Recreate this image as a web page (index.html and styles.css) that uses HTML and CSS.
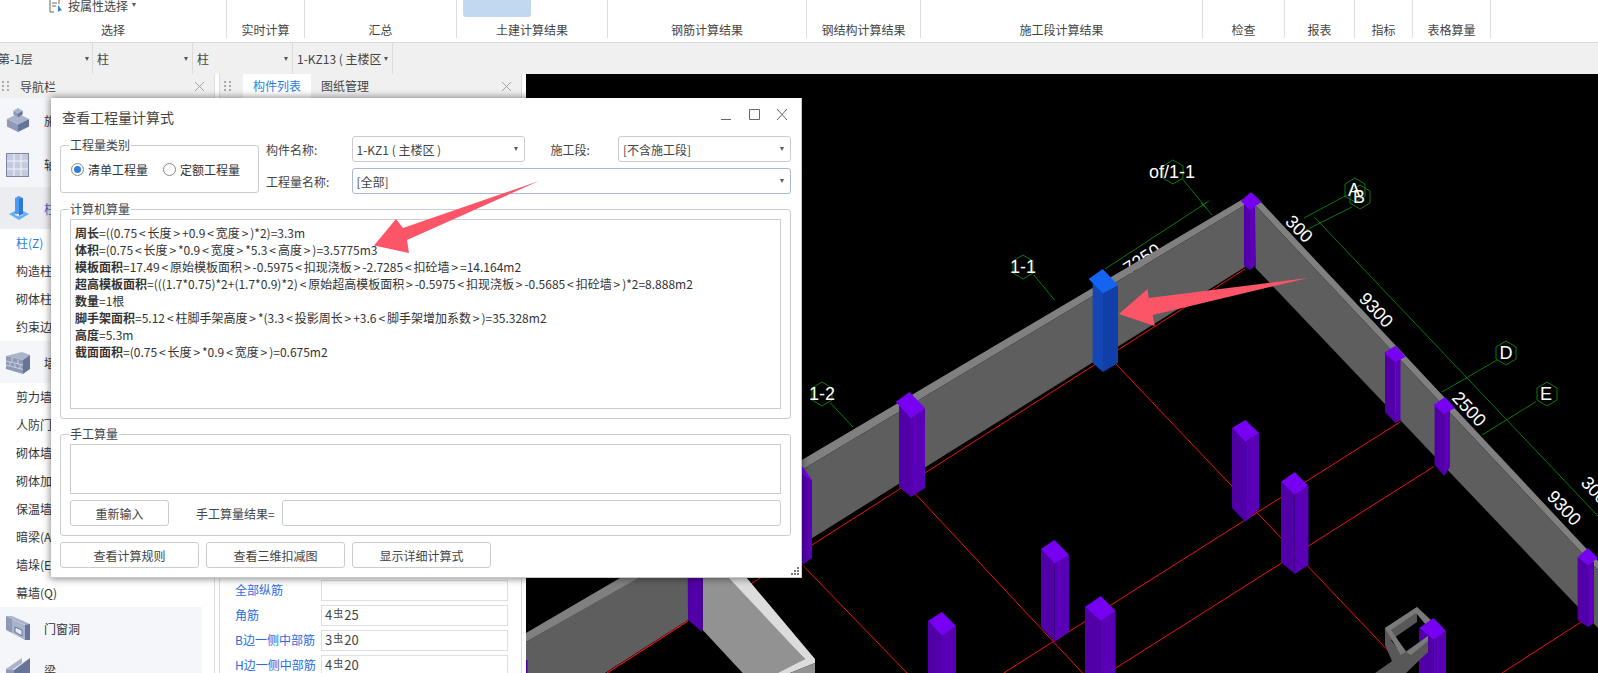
FILE: index.html
```html
<!DOCTYPE html>
<html lang="zh-CN">
<head>
<meta charset="utf-8">
<title>查看工程量计算式</title>
<link rel="stylesheet" href="styles.css">
</head>
<body>
<div class="app">
  <header class="ribbon">
    <section class="rb-group">
      <div class="rb-body rb-select">
        <svg class="rb-icon" viewBox="0 0 14 13"><path class="ln-dark" d="M1 0V12H5M10 0V4M3 3H8M3 6H7"/><path class="fill-blue" d="M9 5V12L11 10.500L13 10.500Z"/></svg>
        <span>按属性选择</span><i class="caret rb-caret"></i>
      </div>
      <div class="rb-label">选择</div>
    </section>
    <section class="rb-group"><div class="rb-body"></div><div class="rb-label">实时计算</div></section>
    <section class="rb-group"><div class="rb-body"></div><div class="rb-label">汇总</div></section>
    <section class="rb-group"><div class="rb-body"><div class="rb-active"></div></div><div class="rb-label">土建计算结果</div></section>
    <section class="rb-group"><div class="rb-body"></div><div class="rb-label">钢筋计算结果</div></section>
    <section class="rb-group"><div class="rb-body"></div><div class="rb-label">钢结构计算结果</div></section>
    <section class="rb-group"><div class="rb-body"></div><div class="rb-label">施工段计算结果</div></section>
    <section class="rb-group"><div class="rb-body"></div><div class="rb-label">检查</div></section>
    <section class="rb-group"><div class="rb-body"></div><div class="rb-label">报表</div></section>
    <section class="rb-group"><div class="rb-body"></div><div class="rb-label">指标</div></section>
    <section class="rb-group"><div class="rb-body"></div><div class="rb-label">表格算量</div></section>
  </header>

  <div class="toolbar">
    <div class="tb-cell tb-first"><span class="tb-text">第-1层</span><i class="caret"></i></div>
    <div class="tb-cell"><span class="tb-text">柱</span><i class="caret"></i></div>
    <div class="tb-cell"><span class="tb-text">柱</span><i class="caret"></i></div>
    <div class="tb-cell"><span class="tb-text">1-KZ13 ( 主楼区 )</span><i class="caret"></i></div>
  </div>

  <main class="workspace">
    <aside class="panel nav-panel">
      <div class="panel-head">
        <span class="grip"><i></i><i></i><i></i><i></i><i></i><i></i></span>
        <span class="panel-title">导航栏</span>
        <svg class="panel-x" viewBox="0 0 10 10"><path d="M0 0L10 10M10 0L0 10"/></svg>
      </div>
      <div class="nav-list">
        <div class="nav-head nav-h44">
          <svg class="nav-icon" viewBox="0 0 24 26"><path class="i-top" d="M12 6L24 12L12 18L0 12Z"/><path class="i-left" d="M0 12L12 18V26L0 20Z"/><path class="i-right" d="M24 12L12 18V26L24 20Z"/><path class="i-top" d="M12 0L17 3L12 6L7 3Z"/><path class="i-left" d="M7 3L12 6V10L7 7Z"/><path class="i-right" d="M17 3L12 6V10L17 7Z"/></svg>
          <span>施工段</span>
        </div>
        <div class="nav-head nav-h44">
          <svg class="nav-icon" viewBox="0 0 24 24"><rect class="i-gridbox" x="0.500" y="0.500" width="22" height="23"/><path class="i-gridln" d="M8 1V23M15 1V23M1 8H22M1 16H22"/></svg>
          <span>轴线</span>
        </div>
        <div class="nav-head nav-active">
          <svg class="nav-icon" viewBox="0 0 24 24"><path class="i-blue" d="M9 2L13 0L17 2V18H9Z"/><path class="i-bluedk" d="M13 3L17 2V18L13 20Z"/><path class="i-bluelt" d="M3 18L9 15V19L13 20.500L17 19V15L23 18L13 24Z"/></svg>
          <span class="nav-active-text">柱</span>
        </div>
        <div class="nav-item nav-current">柱(Z)</div>
        <div class="nav-item">构造柱(Z)</div>
        <div class="nav-item">砌体柱(Z)</div>
        <div class="nav-item">约束边缘非阴影区(Z)</div>
        <div class="nav-head">
          <svg class="nav-icon" viewBox="0 0 24 24"><path class="i-grid" d="M0 6L16 2L24 5L17 10Z"/><path class="i-left" d="M0 6L17 10V24L0 19Z"/><path class="i-right" d="M17 10L24 5V19L17 24Z"/><path class="i-brick" d="M0 11L17 15M0 15L17 19.500M6 8V12M12 9.500V14M4 12V16M9 13.500V18M14 15V19"/></svg>
          <span>墙</span>
        </div>
        <div class="nav-item">剪力墙(Q)</div>
        <div class="nav-item">人防门框墙(RF)</div>
        <div class="nav-item">砌体墙(Q)</div>
        <div class="nav-item">砌体加筋(Y)</div>
        <div class="nav-item">保温墙(Q)</div>
        <div class="nav-item">暗梁(A)</div>
        <div class="nav-item">墙垛(E)</div>
        <div class="nav-item">幕墙(Q)</div>
        <div class="nav-head">
          <svg class="nav-icon" viewBox="0 0 24 24"><path class="i-grid" d="M0 0L6 0L24 8V11L6 3Z"/><path class="i-left" d="M0 0L6 3V17L0 14Z"/><path class="i-right" d="M19 9L24 8V24L19 24Z"/><path class="i-grid" d="M6 3L19 9V24L6 17Z"/><path class="i-hole" d="M9 11L16 14V20L9 16Z"/></svg>
          <span>门窗洞</span>
        </div>
        <div class="nav-head">
          <svg class="nav-icon" viewBox="0 0 24 24"><path class="i-grid" d="M0 11L16 0L16 5L6 12Z"/><path class="i-left" d="M0 11L8 12V24H0Z"/><path class="i-right" d="M8 12L24 0V16L8 24Z"/></svg>
          <span>梁</span>
        </div>
      </div>
    </aside>

    <aside class="panel comp-panel">
      <div class="panel-head comp-head">
        <span class="grip"><i></i><i></i><i></i><i></i><i></i><i></i></span>
        <span class="tab tab-on">构件列表</span>
        <span class="tab">图纸管理</span>
        <svg class="panel-x" viewBox="0 0 10 10"><path d="M0 0L10 10M10 0L0 10"/></svg>
      </div>
      <div class="prop-list">
        <div class="prop-row"><span class="prop-key">全部纵筋</span><span class="prop-val"></span></div>
        <div class="prop-row"><span class="prop-key">角筋</span><span class="prop-val">4<span class="rebar">虫</span>25</span></div>
        <div class="prop-row"><span class="prop-key">B边一侧中部筋</span><span class="prop-val">3<span class="rebar">虫</span>20</span></div>
        <div class="prop-row"><span class="prop-key">H边一侧中部筋</span><span class="prop-val">4<span class="rebar">虫</span>20</span></div>
      </div>
    </aside>

    <div class="viewport">
      <svg class="scene" viewBox="526 74 1072 599">
        <defs>
          <polygon id="hex" class="hex" points="0,-12 10,-6 10,6 0,12 -10,6 -10,-6"/>
        </defs>
        <!-- grid lines -->
        <path class="red" d="M1245 269L746 587M1581 622L1502 673M1400.500 421.700L1003.600 673M1433.600 466.700L1108 673M1115 363L1395 658M802.500 565L907 673M914.500 493L1082.500 673M688 621L607 673"/>
        <!-- dimension lines -->
        <path class="grn" d="M1181.700 178L1212 215M1209 201L1105 269M1201 203L1208 210M1034 275L1054.500 300M830.500 403L853 427M1347 195L1304 218M1352 207L1306 230M1314 216.700L1598 516M1497 360L1442 392M1536 401.700L1482 435"/>
        <use href="#hex" x="1173" y="172"/>
        <use href="#hex" x="1023" y="267"/>
        <use href="#hex" x="822" y="394"/>
        <use href="#hex" x="1355" y="190"/>
        <use href="#hex" x="1360" y="197"/>
        <use href="#hex" x="1506" y="353"/>
        <use href="#hex" x="1547" y="394"/>
        <text class="cad" transform="translate(1142 259) rotate(-33)">7250</text>
        <!-- back-left wall -->
        <path class="wall-strip" d="M1243 199L790 467V477L1245 205Z"/>
        <path class="wall-face" d="M1245 205V267L790 552V477Z"/>
        <!-- back-right wall -->
        <path class="wall-strip" d="M1261 202L1598 561V570L1255 205Z"/>
        <path class="wall-face" d="M1255 205L1598 570V628L1255.500 268Z"/>
        <!-- lower-left walls under the dialog -->
        <path class="wall-strip" d="M526 633L620 578H640L526 642Z"/>
        <path class="wall-face" d="M526 642L640 577H688V620L605 673H526Z"/>
        <path class="red" d="M688 621L607 673"/>
        <path class="wall-lt" d="M702.700 577H735L805 659L780 673H742.700L702.700 630Z"/>
        <path class="wall-hi" d="M728 577H746L815 659V663L790 673H778L805 659Z"/>
        <path class="wall-lt" d="M815 663V673H790Z"/>
        <path class="col-left" d="M526 660H527.500V673H526Z"/>
        <path class="col-left" d="M687.700 577H702.700V630L701 631L688 620Z"/>
        <!-- columns on walls -->
        <path class="col-left" d="M1244 200L1250 208V270L1244 266Z"/><path class="col-right" d="M1250 208L1255 203V266L1250 270Z"/><path class="col-top" d="M1251 192L1261.500 202L1250 210L1240.700 201Z"/>
        <path class="blue-left" d="M1092.600 279L1103 293V372L1092.600 363Z"/><path class="blue-right" d="M1103 293L1118 285V363L1103 372Z"/><path class="blue-top" d="M1102.800 269L1118 285L1102.800 293L1088.600 279Z"/>
        <path class="col-left" d="M899 404L911 418V497L899 487Z"/><path class="col-right" d="M911 418L925 408V488L911 497Z"/><path class="col-top" d="M909.400 392L925 408L911 418L895.700 402Z"/>
        <path class="col-left" d="M800 470L802 474V565L800 563Z"/><path class="col-right" d="M802 474L812 480V558L802 565Z"/><path class="col-top" d="M802 466L812 480L802 474Z"/>
        <path class="col-left" d="M1385 353L1395.400 362V423L1385 412Z"/><path class="col-right" d="M1395.400 362L1400.500 358V420L1395.400 423Z"/><path class="col-top" d="M1395.400 345.700L1405.600 356.700L1395.400 362L1384 352.700Z"/>
        <path class="col-left" d="M1434.600 405L1444 414V475.700L1434.600 465Z"/><path class="col-right" d="M1444 414L1450 410V467L1444 475.700Z"/><path class="col-top" d="M1445 397L1455 408L1444 414L1433.600 405Z"/>
        <path class="col-left" d="M1577.600 557L1588 565V627L1577.600 620Z"/><path class="col-right" d="M1588 565L1594 561V623L1588 627Z"/><path class="col-top" d="M1588 548L1598 558L1588 565L1577.600 557Z"/>
        <!-- free columns -->
        <path class="col-left" d="M1232 428L1245.300 442V521.700L1232 508Z"/><path class="col-right" d="M1245.300 442L1259 433V509L1245.300 521.700Z"/><path class="col-top" d="M1245.300 420L1259 433L1245.300 442L1232 428Z"/>
        <path class="col-left" d="M1281 481.700L1294.700 495V574L1281 562Z"/><path class="col-right" d="M1294.700 495L1308.400 486V565L1294.700 574Z"/><path class="col-top" d="M1294.700 472L1308.400 486L1294.700 495L1281 481.700Z"/>
        <path class="col-left" d="M1041 549L1054.500 564V642L1041 627Z"/><path class="col-right" d="M1054.500 564L1069 555V632L1054.500 642Z"/><path class="col-top" d="M1054.500 540L1069 555L1054.500 564L1041 549Z"/>
        <path class="col-left" d="M1085 607L1100.800 621V673H1085Z"/><path class="col-right" d="M1100.800 621L1115.500 611V673H1100.800Z"/><path class="col-top" d="M1100.800 596L1115.500 611L1100.800 621L1085 607Z"/>
        <path class="col-left" d="M928 621L942 636V673H928Z"/><path class="col-right" d="M942 636L956 626V673H942Z"/><path class="col-top" d="M942 612L956 626L942 636L928 621Z"/>
        <!-- small wall frame -->
        <path class="frame-face" d="M1385 628L1417 607V622L1391 640L1406 660L1395 668L1385 645Z"/>
        <path class="frame-strip" d="M1385 628L1417 607L1431 620L1426 625L1416 613L1391 630L1412 660L1406 664Z"/>
        <path class="col-left" d="M1419 628L1433.600 640V673H1419Z"/><path class="col-right" d="M1433.600 640L1446 631V673H1433.600Z"/><path class="col-top" d="M1433.600 618L1446 631L1433.600 640L1419.300 628Z"/>
        <path class="frame-face" d="M1375 673L1408 650L1428 636V652L1406 673Z"/>
        <path class="frame-strip" d="M1406 652L1428 636V641L1411 655Z"/>
        <!-- labels -->
        <text class="cad" x="1172" y="172">of/1-1</text>
        <text class="cad" x="1023" y="267">1-1</text>
        <text class="cad" x="822" y="394">1-2</text>
        <text class="cad" x="1354" y="190">A</text>
        <text class="cad" x="1359" y="197">B</text>
        <text class="cad" x="1506" y="353">D</text>
        <text class="cad" x="1546" y="394">E</text>
        <text class="cad" transform="translate(1299 229) rotate(45)">300</text>
        <text class="cad" transform="translate(1376 310) rotate(47)">9300</text>
        <text class="cad" transform="translate(1469 409) rotate(47)">2500</text>
        <text class="cad" transform="translate(1564 508) rotate(47)">9300</text>
        <text class="cad" transform="translate(1598 494) rotate(47)">3000</text>
        <path class="pink" d="M1308 278L1148.600 298L1147.600 289L1119 314L1154.700 326L1152.700 315Z"/>
      </svg>
    </div>
  </main>

  <section class="dialog">
    <div class="dlg-title">
      <span class="dlg-name">查看工程量计算式</span>
      <svg class="dlg-ctl" viewBox="0 0 66 12"><path d="M0 10.500H10M28.500 0.500H38.500V10.500H28.500ZM56 0L66 11M66 0L56 11"/></svg>
    </div>
    <div class="dlg-top">
      <div class="group group-kind">
        <span class="legend">工程量类别</span>
        <span class="radio radio-on"></span><span class="radio-text">清单工程量</span>
        <span class="radio radio-second"></span><span class="radio-text">定额工程量</span>
      </div>
      <div class="dlg-form">
        <span class="form-label">构件名称:</span>
        <div class="combo"><span>1-KZ1 ( 主楼区 )</span><i class="caret"></i></div>
        <span class="form-label form-label-2">施工段:</span>
        <div class="combo"><span>[不含施工段]</span><i class="caret"></i></div>
        <span class="form-label">工程量名称:</span>
        <div class="combo combo-wide"><span>[全部]</span><i class="caret"></i></div>
      </div>
    </div>
    <div class="group group-auto">
      <span class="legend">计算机算量</span>
      <div class="calc-box">
        <p><b>周长</b>=((0.75<i class="ch">&lt;</i>长度<i class="ch">&gt;</i>+0.9<i class="ch">&lt;</i>宽度<i class="ch">&gt;</i>)*2)=3.3m</p>
        <p><b>体积</b>=(0.75<i class="ch">&lt;</i>长度<i class="ch">&gt;</i>*0.9<i class="ch">&lt;</i>宽度<i class="ch">&gt;</i>*5.3<i class="ch">&lt;</i>高度<i class="ch">&gt;</i>)=3.5775m3</p>
        <p><b>模板面积</b>=17.49<i class="ch">&lt;</i>原始模板面积<i class="ch">&gt;</i>-0.5975<i class="ch">&lt;</i>扣现浇板<i class="ch">&gt;</i>-2.7285<i class="ch">&lt;</i>扣砼墙<i class="ch">&gt;</i>=14.164m2</p>
        <p><b>超高模板面积</b>=(((1.7*0.75)*2+(1.7*0.9)*2)<i class="ch">&lt;</i>原始超高模板面积<i class="ch">&gt;</i>-0.5975<i class="ch">&lt;</i>扣现浇板<i class="ch">&gt;</i>-0.5685<i class="ch">&lt;</i>扣砼墙<i class="ch">&gt;</i>)*2=8.888m2</p>
        <p><b>数量</b>=1根</p>
        <p><b>脚手架面积</b>=5.12<i class="ch">&lt;</i>柱脚手架高度<i class="ch">&gt;</i>*(3.3<i class="ch">&lt;</i>投影周长<i class="ch">&gt;</i>+3.6<i class="ch">&lt;</i>脚手架增加系数<i class="ch">&gt;</i>)=35.328m2</p>
        <p><b>高度</b>=5.3m</p>
        <p><b>截面面积</b>=(0.75<i class="ch">&lt;</i>长度<i class="ch">&gt;</i>*0.9<i class="ch">&lt;</i>宽度<i class="ch">&gt;</i>)=0.675m2</p>
      </div>
    </div>
    <div class="group group-manual">
      <span class="legend">手工算量</span>
      <div class="manual-box"></div>
      <div class="manual-row">
        <span class="btn btn-reset">重新输入</span>
        <span class="manual-label">手工算量结果=</span>
        <span class="manual-input"></span>
      </div>
    </div>
    <div class="dlg-actions">
      <span class="btn btn-act">查看计算规则</span>
      <span class="btn btn-act">查看三维扣减图</span>
      <span class="btn btn-act">显示详细计算式</span>
    </div>
    <svg class="dlg-grip" viewBox="0 0 10 10"><path d="M7 1h2v2h-2zM4 4h2v2h-2zM7 4h2v2h-2zM1 7h2v2h-2zM4 7h2v2h-2zM7 7h2v2h-2z"/></svg>
  </section>

  <svg class="arrow-over" viewBox="370 175 175 85"><path class="pink" d="M539 181L403 228L396 219L374 245.500L409 253L407 240Z"/></svg>
</div>
</body>
</html>
```

FILE: styles.css
```css
* { box-sizing: border-box; }
html, body { margin: 0; padding: 0; }
body { background: #fff; color: #333; font: 12px/17px "Noto Sans CJK SC", "Liberation Sans", sans-serif; }
p { margin: 0; }
i { font-style: normal; }

.app { position: relative; width: 1598px; height: 673px; overflow: hidden; display: flex; flex-direction: column; }

/* ribbon */
.ribbon { flex: none; height: 43px; display: grid; grid-template-columns: 227px 78px 152px 151px 199px 114px 282px 82px 70px 58px 78px; background: #fff; border-bottom: 1px solid #d9d9d9; }
.rb-group { height: 38px; border-right: 1px solid #dedede; display: flex; flex-direction: column; }
.rb-body { height: 22px; }
.rb-label { height: 16px; line-height: 16px; text-align: center; color: #444; }
.rb-select { display: flex; align-items: flex-start; height: 22px; padding-left: 49px; color: #444; }
.rb-icon { width: 14px; height: 13px; margin-right: 5px; }
.rb-select span { margin-top: -3px; }
.rb-caret { margin: 3px 0 0 4px; }
.ln-dark { fill: none; stroke: #666; stroke-width: 1; }
.fill-blue { fill: #2a7de1; }
.rb-active { width: 68px; height: 17px; margin-left: 6px; background: #c1d8f0; border-radius: 0 0 3px 3px; }

/* toolbar */
.toolbar { flex: none; height: 31px; display: flex; background: #f0f0f0; }
.tb-cell { width: 100px; height: 31px; display: flex; align-items: center; justify-content: space-between; padding: 0 4px; border-right: 1px solid #dcdcdc; color: #444; }
.tb-first { width: 93px; padding-left: 0; padding-right: 3px; }
.tb-first .tb-text { margin-left: -2px; }
.tb-text { width: 84px; overflow: hidden; white-space: nowrap; }
.caret { flex: none; display: block; width: 0; height: 0; border-left: 2.500px solid transparent; border-right: 2.500px solid transparent; border-top: 4px solid #555; }

/* workspace */
.workspace { flex: 1; min-height: 0; display: flex; background: #fff; }
.panel { flex: none; display: flex; flex-direction: column; height: 599px; overflow: hidden; }
.nav-panel { width: 215px; border-right: 1px solid #dcdcdc; }
.comp-panel { width: 303px; margin-left: 4px; border-left: 1px solid #dcdcdc; border-right: 1px solid #dcdcdc; }
.panel-head { flex: none; height: 24px; display: flex; align-items: center; background: #f0f0f0; color: #444; }
.panel-title { margin-left: 11px; }
.grip { width: 7px; margin-left: 2px; display: grid; grid-template-columns: 2px 2px; gap: 2px 3px; }
.grip i { width: 2px; height: 2px; background: #aaa; }
.panel-x { width: 9px; height: 9px; margin-left: auto; margin-right: 10px; fill: none; stroke: #999; stroke-width: 1; }
.comp-head .grip { margin-left: 4px; margin-right: 12px; }
.tab { height: 24px; line-height: 24px; padding: 0 10px; }
.tab-on { background: #fff; color: #1f7fe0; }

.nav-list { width: 202px; }
.nav-head { height: 42px; padding-left: 6px; display: flex; align-items: center; background: #f4f6f9; color: #333; }
.nav-h44 { height: 44.500px; }
.nav-active { background: #ecedf0; height: 42px; }
.nav-active-text { color: #4a63c8; }
.nav-icon { flex: none; width: 24px; height: 24px; margin-right: 14px; }
.nav-item { height: 28px; line-height: 28px; padding-left: 16px; white-space: nowrap; color: #333; }
.nav-current { color: #1f7fe0; }
.i-top, .i-grid { fill: #a9b3cc; }
.i-left { fill: #8e99b6; }
.i-right { fill: #67749a; }
.i-gridbox { fill: #c3cbdf; stroke: #7c86a3; stroke-width: 1; }
.i-gridln { fill: none; stroke: #f2f4f9; stroke-width: 1; }
.i-brick { fill: none; stroke: #c9cfe0; stroke-width: 1; }
.i-hole { fill: #e6e9f0; stroke: #67749a; }
.i-blue { fill: #4a9bf0; }
.i-bluedk { fill: #2d78d8; }
.i-bluelt { fill: #69aef2; }

.prop-list { padding: 482px 0 0 15px; }
.prop-row { display: flex; align-items: center; height: 21px; margin-bottom: 4px; }
.prop-key { width: 86px; margin-top: -2px; white-space: nowrap; color: #2a6be0; }
.prop-val { width: 187px; height: 21px; border: 1px solid #dedede; line-height: 17px; padding-left: 3px; color: #444; font-size: 13px; }
.rebar { font-size: 10px; position: relative; top: -3px; margin: 0 1px; }

/* 3D viewport */
.viewport { flex: 1; margin-left: 4px; min-width: 0; height: 599px; background: #000; }
.scene { display: block; width: 1072px; height: 599px; }
.hex { fill: none; stroke: #0b7a0b; stroke-width: 1; }
.red { fill: none; stroke: #f01010; stroke-width: 1; }
.grn { fill: none; stroke: #0a780a; stroke-width: 1; }
.cad { fill: #fff; font: 18px "Liberation Sans", sans-serif; text-anchor: middle; dominant-baseline: central; }
.wall-strip { fill: #808080; }
.wall-face { fill: #5e5e5e; }
.wall-lt { fill: #929292; }
.wall-hi { fill: #dcdcdc; }
.frame-face { fill: #585858; }
.frame-strip { fill: #7a7a7a; }
.col-top { fill: #7700f2; }
.col-left { fill: #5000a6; }
.col-right { fill: #5900b6; }
.blue-top { fill: #1464f4; }
.blue-left { fill: #1446b4; }
.blue-right { fill: #103fa8; }
.pink { fill: #fd5568; }

/* dialog */
.dialog { position: absolute; left: 51px; top: 98px; width: 751px; height: 480px; padding: 0 10px 0 9px; background: #fff; border: 1px solid #c8c8c8; border-width: 0 1px 1px 0; box-shadow: 0 0 7px 1px rgba(0, 0, 0, .45); }
.dlg-title { height: 38px; display: flex; align-items: center; justify-content: space-between; padding-right: 4px; }
.dlg-name { font-size: 14px; line-height: 38px; margin-left: 2px; color: #444; }
.dlg-ctl { width: 66px; height: 12px; margin-top: -4px; fill: none; stroke: #666; stroke-width: 1; }
.dlg-top { display: flex; gap: 7px; }
.group { position: relative; border: 1px solid #ccc; border-radius: 3px; }
.legend { position: absolute; left: 8px; top: -9px; padding: 0 1px; background: #fff; color: #444; line-height: 16px; }
.group-kind { flex: none; width: 199px; height: 48px; margin-top: 9px; display: flex; align-items: center; padding-left: 10px; }
.radio { position: relative; flex: none; width: 13px; height: 13px; margin-right: 4px; border: 1px solid #888; border-radius: 50%; background: #fff; }
.radio-second { margin-left: 15px; }
.radio-on::after { content: ""; position: absolute; left: 2px; top: 2px; width: 7px; height: 7px; border-radius: 50%; background: #2a7de1; }
.radio-text { white-space: nowrap; color: #333; }
.dlg-form { display: grid; grid-template-columns: 85.500px 173px 93.500px 173px; grid-template-rows: 26px 26px; row-gap: 6px; align-items: center; }
.form-label { color: #444; white-space: nowrap; }
.form-label-2 { padding-left: 26px; }
.combo { height: 26px; display: flex; align-items: center; justify-content: space-between; padding: 0 6px 0 4px; border: 1px solid #ccc; border-radius: 3px; color: #444; background: #fff; white-space: nowrap; }
.combo-wide { grid-column: 2 / 5; border-color: #a9bad8; }

.group-auto { height: 210px; margin-top: 15px; padding: 9px; }
.calc-box { height: 190px; padding: 4px 4px; border: 1px solid #ccc; color: #333; }
.calc-box p { height: 17px; white-space: nowrap; }
.ch { margin: 0 1.900px; }
.group-manual { height: 102px; margin-top: 15px; padding: 9px 9px 0; }
.manual-box { height: 50px; border: 1px solid #ccc; }
.manual-row { display: flex; align-items: center; margin-top: 6px; }
.btn { display: flex; align-items: center; justify-content: center; height: 26px; border: 1px solid #ccc; border-radius: 3px; background: #fff; color: #444; white-space: nowrap; }
.btn-reset { width: 99px; }
.manual-label { margin-left: 27px; width: 86px; color: #444; white-space: nowrap; }
.manual-input { flex: 1; height: 26px; border: 1px solid #ccc; border-radius: 3px; }
.dlg-actions { display: flex; gap: 7px; margin-top: 6px; }
.btn-act { width: 139px; }
.dlg-grip { position: absolute; right: 1px; bottom: 1px; width: 10px; height: 10px; fill: #777; }

.arrow-over { position: absolute; left: 370px; top: 175px; width: 175px; height: 85px; pointer-events: none; }
```
